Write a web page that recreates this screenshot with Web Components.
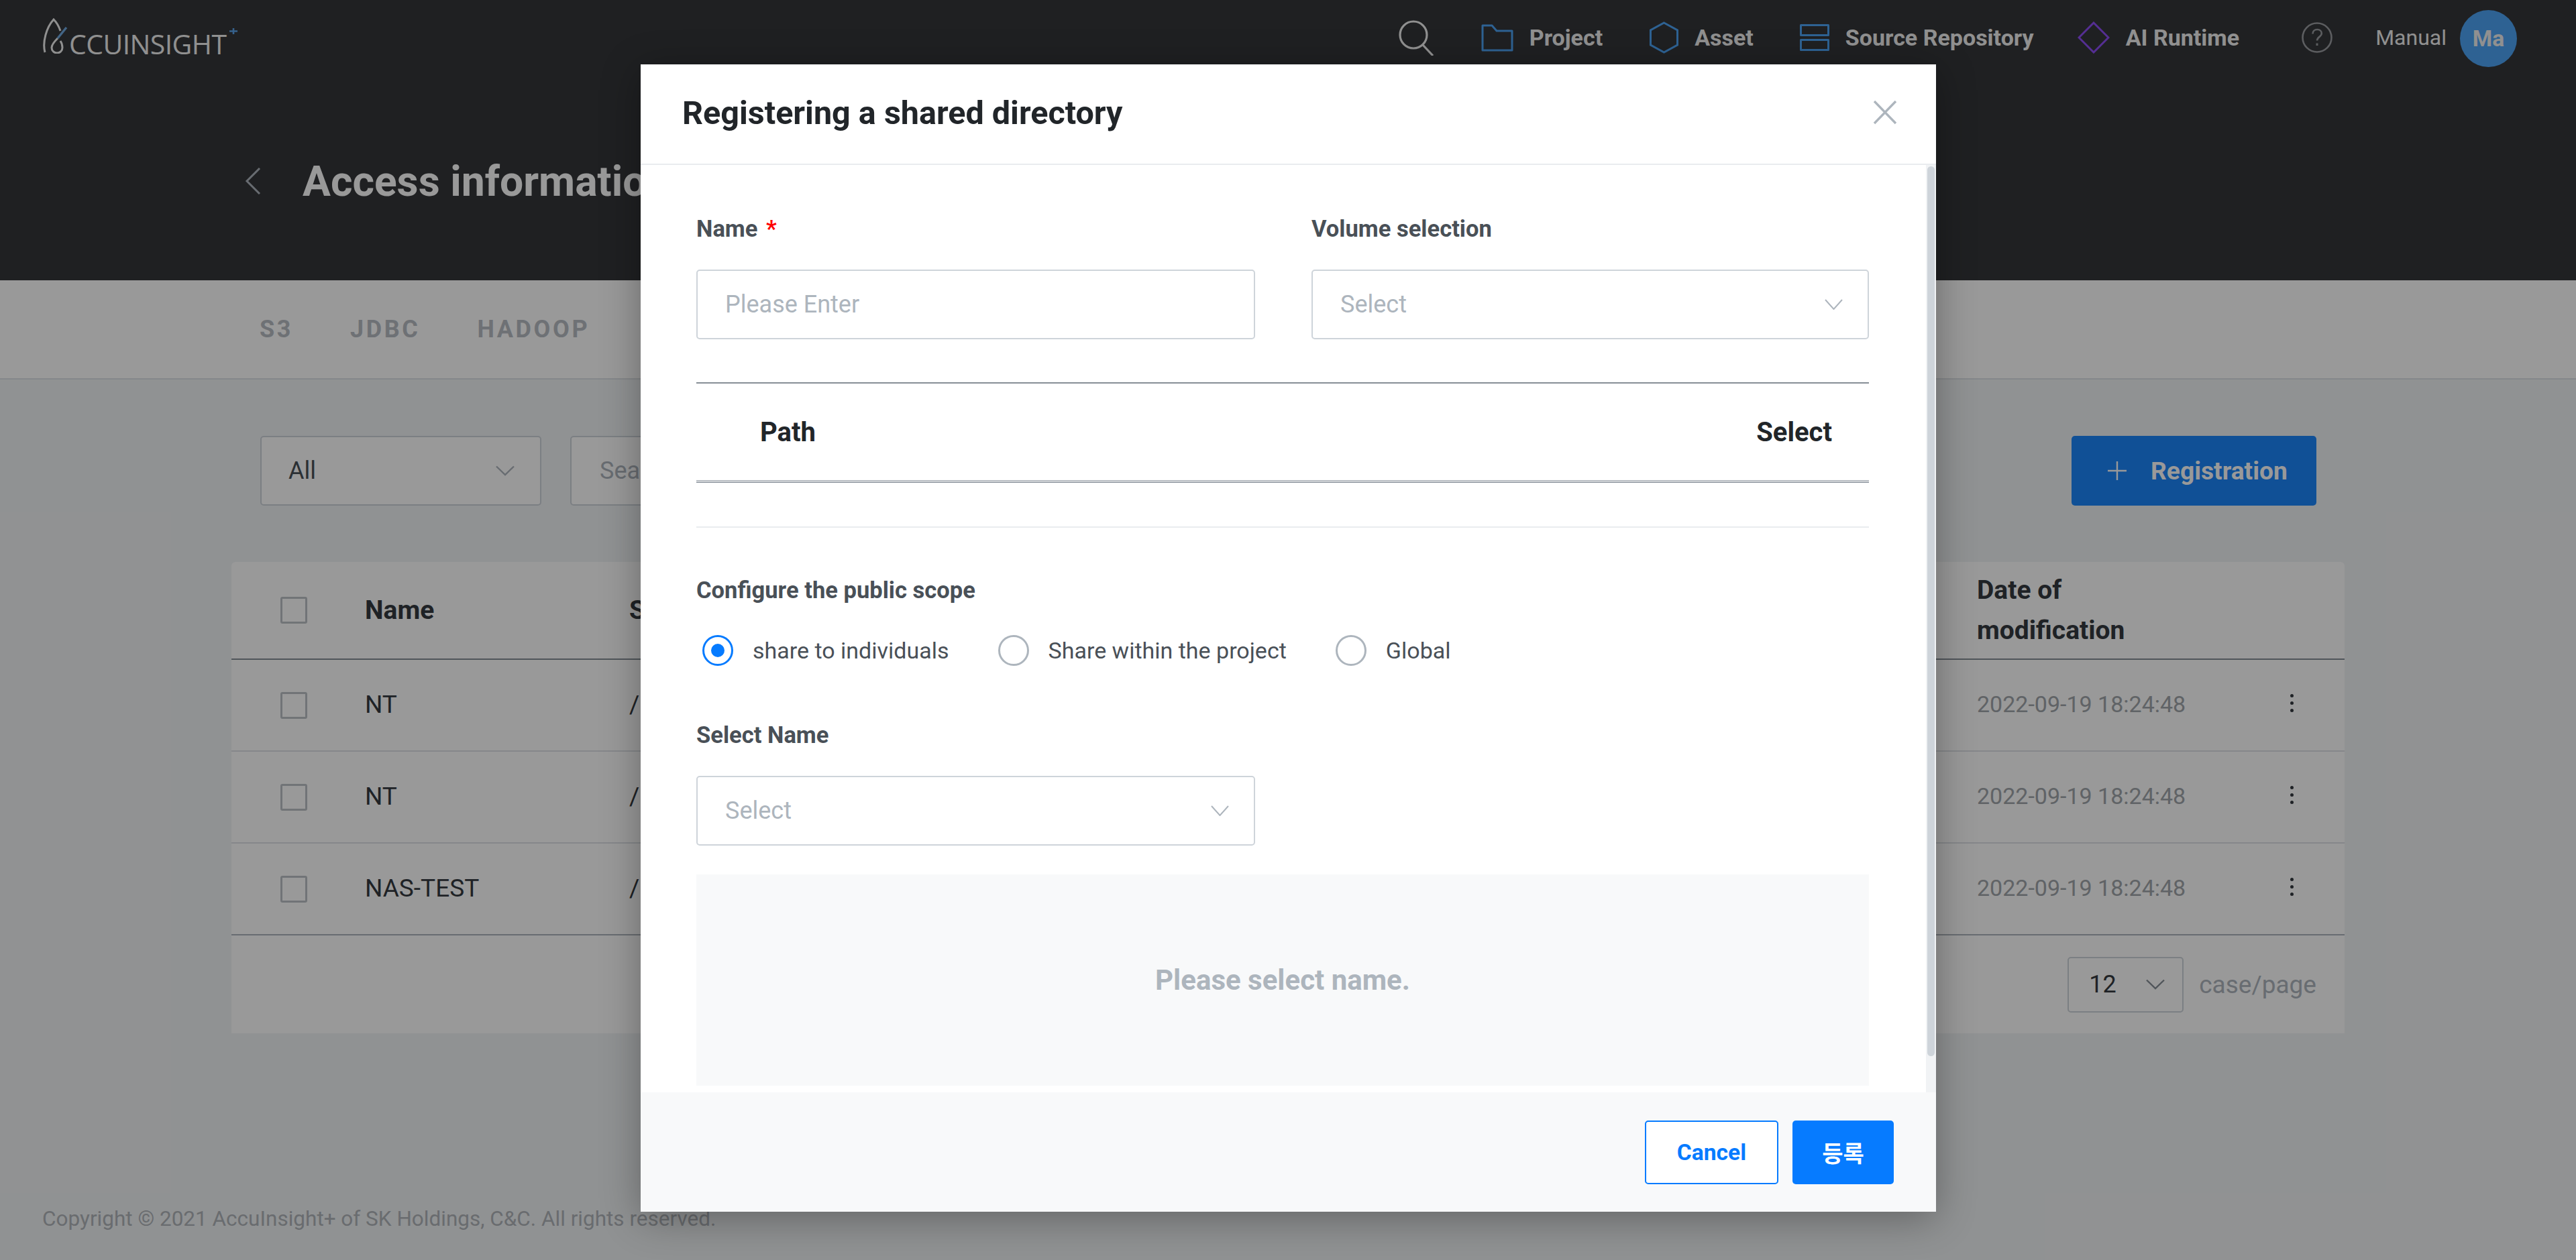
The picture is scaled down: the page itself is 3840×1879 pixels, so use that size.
<!DOCTYPE html>
<html>
<head>
<meta charset="utf-8">
<title>Registering a shared directory</title>
<style>
  html, body { margin: 0; padding: 0; height: 100%; }
  body { font-family: Roboto, "Noto Sans CJK KR", sans-serif; background: #f1f3f5; overflow: hidden; }
</style>
</head>
<body>
<template id="app-header-tpl">
  <style>
    :host { display: block; background: #343639; height: 418px; color: #fff; }
    .top { display: flex; align-items: center; height: 112px; padding: 0 88px 0 64px; }
    .logo { display: flex; align-items: flex-end; height: 53px; margin-top: -5px; flex: 1; position: relative; }
    .logo svg { display: block; width: 42px; height: 53px; flex: none; }
    .logo span { font: 400 41px/30px "Open Sans", sans-serif; letter-spacing: -.600px; color: #f0f0f0; display: block; margin-left: -3px; white-space: nowrap; height: 30px; }
    nav { display: flex; align-items: center; font-size: 34px; font-weight: 700; color: #f0f0f0; }
    .item { display: flex; align-items: center; gap: 24px; margin-left: 69px; white-space: nowrap; }
    svg { display: block; flex: none; }
    .manual { font-weight: 400; font-size: 32px; margin-left: 64px; }
    .avatar { width: 85px; height: 85px; border-radius: 50%; background: #4da3f5; display: flex; align-items: center; justify-content: center; font-weight: 700; font-size: 33.600px; margin-left: 20px; margin-top: 2px; }
    .title { display: flex; align-items: center; padding: 0 0 0 365px; margin-top: 124px; height: 68px; }
    h1 { margin: 0 0 0 62px; font-size: 62.400px; font-weight: 700; color: #fff; white-space: nowrap; }
  </style>
  <div class="top">
    <div class="logo">
      <svg viewBox="0 0 42 53" fill="none" stroke="#f0f0f0" stroke-width="3">
        <path d="M3 51C-1 36 5 14 16 2c4 4 8 11 10 17"/>
        <path d="M22 30c-5 5-9 10-9 14 0 5 4 8 8 8s8-3 8-8c0-3-1-7-3-10"/>
        <path d="M35 14 22 30" stroke="#6fa8e0" stroke-width="3.400"/>
      </svg>
      <span>CCUINSIGHT</span>
      <svg viewBox="0 0 12 9" style="position:absolute;left:278px;top:15px;width:12px;height:9px" fill="none" stroke="#5aa2ea" stroke-width="2.600"><path d="M6 0v9M0 4.500h12"/></svg>
    </div>
    <nav>
      <svg width="54" height="54" viewBox="0 0 54 54" fill="none" stroke="#f0f0f0" stroke-width="3.200"><circle cx="22" cy="23" r="20"/><path d="M36 38l15 16"/></svg>
      <div class="item"><svg width="48" height="41" viewBox="0 0 48 41" fill="none" stroke="#4da3f5" stroke-width="3" stroke-linejoin="round"><path d="M2 39V2h14l7 8h23v29z"/></svg>Project</div>
      <div class="item" style="margin-left:70px"><svg width="43" height="48" viewBox="0 0 43 48" fill="none" stroke="#4da3f5" stroke-width="3"><path d="M21.500 2l20 11v22l-20 11-20-11V13z"/></svg>Asset</div>
      <div class="item"><svg width="44" height="40" viewBox="0 0 44 40" fill="none" stroke="#4da3f5" stroke-width="3" stroke-linejoin="round"><rect x="1.500" y="1.500" width="41" height="15"/><rect x="1.500" y="23.500" width="41" height="15"/></svg>Source Repository</div>
      <div class="item" style="margin-left:65px"><svg width="48" height="48" viewBox="0 0 48 48" fill="none" stroke="#8e4df5" stroke-width="3"><path d="M24 2l22 22-22 22L2 24z"/></svg>AI Runtime</div>
      <svg style="margin-left:93px" width="46" height="46" viewBox="0 0 46 46" fill="none" stroke="#9a9ca0" stroke-width="2.600"><circle cx="23" cy="23" r="21.500"/><path d="M16.500 17.500c0-4 3-6.500 6.800-6.500 3.800 0 6.500 2.400 6.500 5.800 0 5-6.800 5.200-6.800 10.700"/><path d="M23 31.500v3.500" stroke-width="3"/></svg>
      <span class="manual">Manual</span>
      <div class="avatar">Ma</div>
    </nav>
  </div>
  <div class="title">
    <svg width="24" height="40" viewBox="0 0 24 40" fill="none" stroke="#adb5bd" stroke-width="3"><path d="M22 1 3 20l19 19"/></svg>
    <h1><slot></slot></h1>
  </div>
</template>

<template id="tab-bar-tpl">
  <style>
    :host { display: flex; align-items: center; gap: 85px; height: 146px; padding-left: 387px; background: #fff; border-bottom: 2px solid #dee2e6; font-size: 36px; font-weight: 700; letter-spacing: 3.600px; color: #b8bdc4; }
  </style>
  <slot></slot>
</template>

<template id="filter-bar-tpl">
  <style>
    :host { display: flex; align-items: center; gap: 43px; padding: 84px 387px 84px 388px; }
    .grow { flex: 1; }
    .box { height: 104px; box-sizing: border-box; border: 2px solid #ced4da; border-radius: 5px; background: #fff; display: flex; align-items: center; font-size: 36px; }
    .all { width: 419px; padding: 0 38px 0 40px; color: #495057; justify-content: space-between; }
    .search { width: 800px; padding: 0 42px; color: #adb5bd; }
    .reg { width: 365px; height: 104px; border-radius: 5px; background: #1c85fa; color: #fff; font-size: 37.200px; font-weight: 700; display: flex; align-items: center; padding-left: 54px; gap: 36px; box-sizing: border-box; }
    svg { display: block; flex: none; }
  </style>
  <div class="box all">All <svg width="28" height="16" viewBox="0 0 28 16" fill="none" stroke="#adb5bd" stroke-width="2.400"><path d="M1 1.500 14 14 27 1.500"/></svg></div>
  <div class="box search">Search</div>
  <div class="grow"></div>
  <div class="reg"><svg width="28" height="28" viewBox="0 0 28 28" fill="none" stroke="#fff" stroke-width="2.400"><path d="M14 0v28M0 14h28"/></svg>Registration</div>
</template>

<template id="data-table-tpl">
  <style>
    :host { display: block; margin: 0 345px; background: #fff; border-radius: 6px 6px 0 0; height: 703px; }
    .head { display: grid; grid-template-columns: 199px 394px 2009px 398px 1fr; align-items: center; height: 144px; border-bottom: 2px solid #868e96; font-size: 39px; font-weight: 700; line-height: 60px; color: #343a40; }
    i { display: block; width: 40px; height: 40px; margin-left: 73px; box-sizing: border-box; border: 3px solid #bcc1c7; border-radius: 3px; background: #fff; }
    .pager { display: flex; justify-content: flex-end; align-items: center; height: 146px; padding-right: 42px; gap: 23px; font-size: 37px; color: #adb5bd; }
    .sel { width: 173px; height: 83px; box-sizing: border-box; border: 2px solid #ced4da; border-radius: 5px; display: flex; align-items: center; justify-content: space-between; padding: 0 26px 0 30px; color: #343a40; font-size: 36px; }
    svg { display: block; }
  </style>
  <div class="head"><i></i><div>Name</div><div>S</div><div>Date of<br>modification</div><div></div></div>
  <slot></slot>
  <div class="pager">
    <div class="sel">12 <svg width="28" height="16" viewBox="0 0 28 16" fill="none" stroke="#868e96" stroke-width="2.400"><path d="M1 1.500 14 14 27 1.500"/></svg></div>
    case/page
  </div>
</template>

<template id="table-row-tpl">
  <style>
    :host { display: grid; grid-template-columns: 199px 394px 2009px 398px 1fr; align-items: center; height: 135px; border-bottom: 2px solid #dee2e6; font-size: 37px; color: #343a40; }
    :host([last]) { border-bottom-color: #adb5bd; }
    i { display: block; width: 40px; height: 40px; margin-left: 73px; box-sizing: border-box; border: 3px solid #bcc1c7; border-radius: 3px; background: #fff; }
    #name, #path, #date { padding-bottom: 3px; }
    #date { font-size: 34px; color: #a0a5aa; }
    .more { display: flex; flex-direction: column; gap: 6px; width: 5px; margin-left: 69px; margin-top: -6px; }
    .more b { width: 5px; height: 5px; border-radius: 50%; background: #343a40; display: block; }
  </style>
  <i></i><div id="name"></div><div id="path"></div><div id="date"></div><div class="more"><b></b><b></b><b></b></div>
</template>

<template id="form-select-tpl">
  <style>
    :host { display: flex; align-items: center; justify-content: space-between; height: 104px; box-sizing: border-box; border: 2px solid #ced4da; border-radius: 5px; background: #fff; padding: 0 37px 0 41px; font-size: 36px; color: #adb5bd; }
    svg { display: block; flex: none; }
  </style>
  <slot></slot>
  <svg width="27" height="16" viewBox="0 0 27 16" fill="none" stroke="#adb5bd" stroke-width="2"><path d="M1 1 13.500 15 26 1"/></svg>
</template>

<template id="form-radio-tpl">
  <style>
    :host { display: inline-flex; align-items: center; gap: 29px; font-size: 34px; color: #495057; white-space: nowrap; }
    .dot { width: 46px; height: 46px; box-sizing: border-box; border: 3px solid #adb5bd; border-radius: 50%; background: #fff; display: flex; align-items: center; justify-content: center; }
    :host([checked]) .dot { border-color: #067bff; }
    :host([checked]) .dot::after { content: ""; width: 20px; height: 20px; border-radius: 50%; background: #067bff; }
  </style>
  <span class="dot"></span><slot></slot>
</template>

<template id="share-modal-tpl">
  <style>
    :host { position: absolute; left: 955px; top: 96px; width: 1931px; height: 1711px; background: #fff; border-radius: 0 0 7px 7px; box-shadow: 0 10px 60px rgba(0,0,0,.32); display: flex; flex-direction: column; z-index: 2; }
    header { flex: none; display: flex; align-items: center; justify-content: space-between; height: 150px; padding: 0 58px 4px 62px; box-sizing: border-box; border-bottom: 2px solid #e9ecef; }
    h2 { margin: 0; font-size: 48.500px; font-weight: 700; color: #212529; }
    .x { display: block; width: 36px; height: 36px; }
    .body { flex: 1; min-height: 0; display: flex; overflow: hidden; background: #fff; }
    .content { flex: 1; padding: 75px 85px 0 83px; min-width: 0; }
    .bar { flex: none; width: 15px; background: #f1f3f5; padding: 2px; box-sizing: border-box; }
    .bar div { height: 1327px; background: #ced4da; border-radius: 6px; width: 11px; }
    .cols { display: grid; grid-template-columns: 833px 831px; gap: 84px; }
    label { display: block; font-size: 34.560px; line-height: 40px; font-weight: 700; color: #495057; margin-bottom: 41px; }
    label em { color: #ff0000; font-style: normal; margin-left: 4px; }
    .ph { display: block; height: 104px; box-sizing: border-box; border: 2px solid #ced4da; border-radius: 5px; padding: 0 41px; font-size: 36px; line-height: 100px; color: #adb5bd; }
    .path { margin-top: 64px; height: 144px; border-top: 2px solid #868e96; border-bottom: 1.500px solid #9aa1a9; display: flex; align-items: center; justify-content: space-between; padding: 0 55px 0 95px; font-size: 40px; font-weight: 700; color: #212529; }
    .rule2 { height: 1.500px; background: #9aa1a9; margin-top: 1px; }
    hr { margin: 65px 0 0; border: 0; border-top: 2px solid #e9ecef; }
    .scope { margin: 73px 0 0; }
    .scope label { margin-bottom: 47px; }
    .radios { display: flex; gap: 73px; padding-left: 9px; }
    .pick { margin-top: 83px; }
    .pick label { margin-bottom: 41px; }
    .pick form-select { width: 833px; }
    .empty { margin-top: 43px; height: 315px; background: #f8f9fa; display: flex; align-items: center; justify-content: center; font-size: 42px; font-weight: 700; color: #adb5bd; }
    footer { flex: none; display: flex; justify-content: flex-end; align-items: center; gap: 21px; height: 178px; padding: 0 63px 0 0; box-sizing: border-box; background: #f8f9fa; }
    .btn { height: 95px; box-sizing: border-box; border-radius: 5px; display: flex; align-items: center; justify-content: center; font-size: 33.600px; font-weight: 700; }
    .cancel { width: 199px; border: 2px solid #067bff; background: #fff; color: #067bff; }
    .ok { width: 151px; background: #067bff; color: #fff; font-size: 34px; font-family: "Noto Sans CJK KR", Roboto, sans-serif; }
  </style>
  <header>
    <h2>Registering a shared directory</h2>
    <svg class="x" viewBox="0 0 36 36" fill="none" stroke="#adb5bd" stroke-width="3.400"><path d="M2 1l32 33M34 1 2 34"/></svg>
  </header>
  <div class="body">
    <div class="content">
      <div class="cols">
        <div><label>Name <em>*</em></label><span class="ph">Please Enter</span></div>
        <div><label>Volume selection</label><form-select>Select</form-select></div>
      </div>
      <div class="path"><span>Path</span><span>Select</span></div>
      <div class="rule2"></div>
      <hr>
      <div class="scope">
        <label>Configure the public scope</label>
        <div class="radios">
          <form-radio checked>share to individuals</form-radio>
          <form-radio>Share within the project</form-radio>
          <form-radio>Global</form-radio>
        </div>
      </div>
      <div class="pick">
        <label>Select Name</label>
        <form-select>Select</form-select>
      </div>
      <div class="empty">Please select name.</div>
    </div>
    <div class="bar"><div></div></div>
  </div>
  <footer>
    <div class="btn cancel">Cancel</div>
    <div class="btn ok">등록</div>
  </footer>
</template>

<template id="page-shell-tpl">
  <style>
    :host { display: flex; flex-direction: column; height: 1879px; width: 3840px; position: relative; overflow: hidden; }
    .copy { margin-top: auto; padding: 0 0 41px 63px; font-size: 31.500px; line-height: 40px; color: #b0b4b9; }
    .veil { position: absolute; inset: 0; background: rgba(0,0,0,.4); z-index: 1; }
  </style>
  <slot></slot>
  <div class="copy">Copyright © 2021 AccuInsight+ of SK Holdings, C&amp;C. All rights reserved.</div>
  <div class="veil"></div>
  <slot name="modal"></slot>
</template>

<app-shell>
  <app-header>Access information</app-header>
  <tab-bar><span>S3</span><span>JDBC</span><span>HADOOP</span></tab-bar>
  <filter-bar></filter-bar>
  <data-table>
    <table-row name="NT" path="/" date="2022-09-19 18:24:48"></table-row>
    <table-row name="NT" path="/" date="2022-09-19 18:24:48"></table-row>
    <table-row name="NAS-TEST" path="/" date="2022-09-19 18:24:48" last></table-row>
  </data-table>
  <share-modal slot="modal"></share-modal>
</app-shell>

<script>
function stamp(tag, tplId, setup) {
  customElements.define(tag, class extends HTMLElement {
    constructor() {
      super();
      this.attachShadow({ mode: 'open' });
      this.shadowRoot.appendChild(document.getElementById(tplId).content.cloneNode(true));
    }
    connectedCallback() {
      if (setup) setup(this);
    }
  });
}

stamp('app-header', 'app-header-tpl');
stamp('tab-bar', 'tab-bar-tpl');
stamp('filter-bar', 'filter-bar-tpl');
stamp('data-table', 'data-table-tpl');
stamp('table-row', 'table-row-tpl', el => {
  for (const key of ['name', 'path', 'date']) {
    el.shadowRoot.getElementById(key).textContent = el.getAttribute(key);
  }
});
stamp('form-select', 'form-select-tpl');
stamp('form-radio', 'form-radio-tpl');
stamp('share-modal', 'share-modal-tpl');
stamp('app-shell', 'page-shell-tpl');
</script>
</body>
</html>
